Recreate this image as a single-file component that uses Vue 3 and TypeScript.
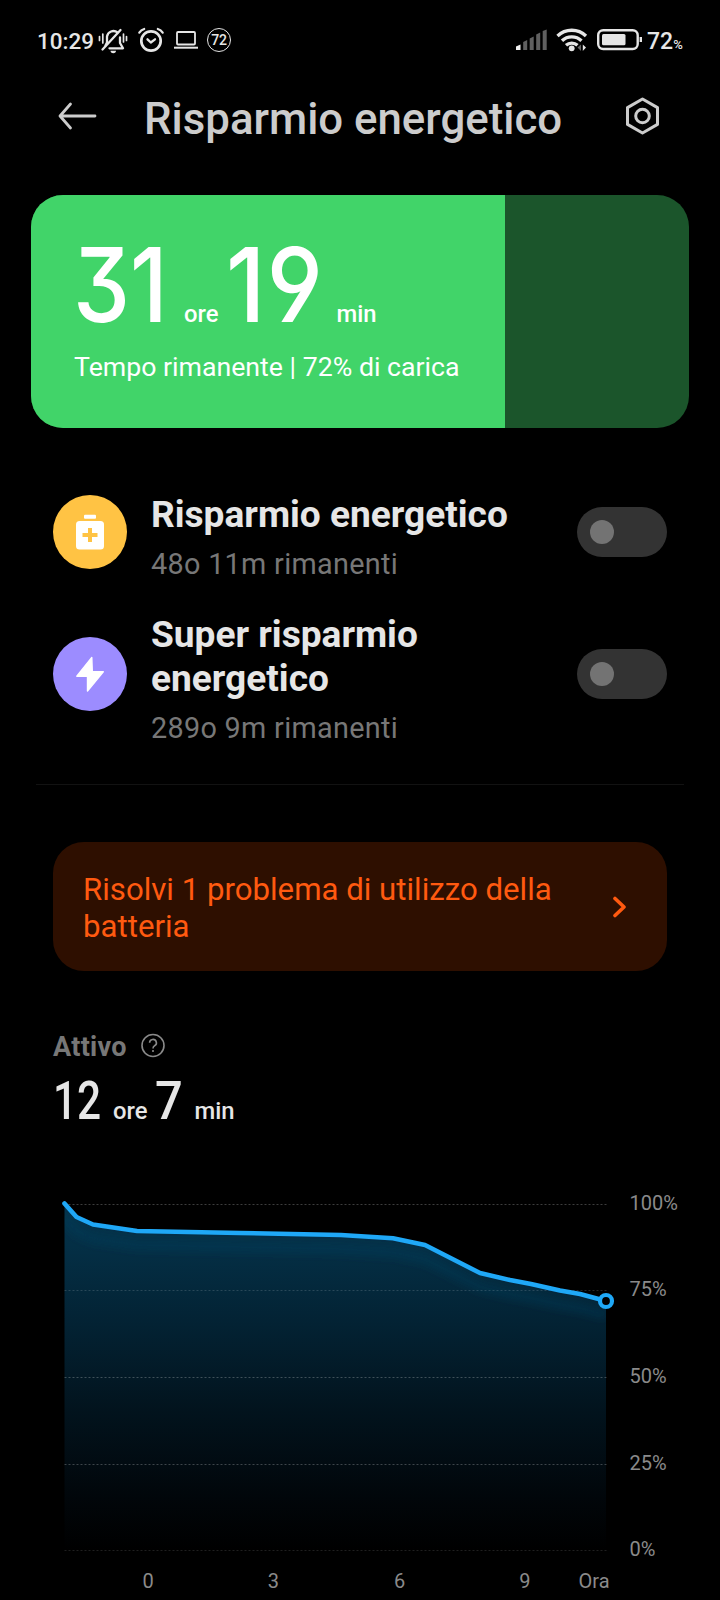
<script setup lang="ts">
import { ref } from 'vue'

interface Mode {
  id: string
  title: string
  remaining: string
  on: boolean
}

const charge = 72

const modes = ref<Mode[]>([
  { id: 'saver', title: 'Risparmio energetico', remaining: '48o 11m rimanenti', on: false },
  { id: 'super', title: 'Super risparmio energetico', remaining: '289o 9m rimanenti', on: false },
])

const levels = [
  { label: '100%', y: 24.5, opacity: 0.24 },
  { label: '75%', y: 110.5, opacity: 0.15 },
  { label: '50%', y: 197.5, opacity: 0.24 },
  { label: '25%', y: 284.5, opacity: 0.24 },
  { label: '0%', y: 370.5, opacity: 0.12 },
]

const hours = [
  { label: '0', x: 148.2 },
  { label: '3', x: 273.4 },
  { label: '6', x: 399.6 },
  { label: '9', x: 524.8 },
  { label: 'Ora', x: 594 },
]

const points: [number, number][] = [
  [64.5, 23.5], [76.5, 37], [93, 44.5], [137, 51], [240, 53], [341, 55], [393, 58.2],
  [425, 65], [480, 93], [510, 100], [531, 104], [560, 110.5], [580, 114], [606, 121],
]
const line = points.map((p) => p.join(',')).join(' ')
const area = `${line} 606,370 64.5,370`
</script>

<template>
  <main class="screen">
    <div class="status">
      <span class="clock">10:29</span>
      <svg class="bell" width="30" height="28" viewBox="0 0 30 28">
        <g fill="none" stroke="#e6e6e6" stroke-width="2.300" stroke-linecap="round" stroke-linejoin="round">
          <path d="M7.500 19.500l1.500-3v-6a6.500 6.500 0 0 1 10.500-4M11.500 22.300H25L22 17v-5.500" />
          <path d="M4.500 23.500L22.500 4" stroke-width="2.300" />
          <path d="M1.500 10.500v4M4.800 8v9M28.500 10.500v4M25.500 8v8" stroke-width="1.700" />
        </g>
        <path d="M12.500 24.800h5.500a2.750 2.400 0 0 1-5.500 0z" fill="#e6e6e6" />
      </svg>
      <svg class="alarm" width="28" height="26" viewBox="0 0 28 26">
        <g fill="none" stroke="#e6e6e6" stroke-linecap="round">
          <circle cx="14" cy="14" r="9.700" stroke-width="2.700" />
          <path d="M2.300 5.700Q4 3 7.200 2M25.700 5.700Q24 3 20.800 2" stroke-width="2.200" />
          <path d="M10.500 12.300l3.300 3.200 4.200-3.200" stroke-width="2.300" stroke-linejoin="round" />
        </g>
      </svg>
      <svg class="laptop" width="26" height="20" viewBox="0 0 26 20">
        <rect x="4" y="2" width="18" height="12.500" rx="1" fill="none" stroke="#e6e6e6" stroke-width="1.800" />
        <path d="M1 17.700h24" stroke="#e6e6e6" stroke-width="2" />
      </svg>
      <span class="ring">72</span>
      <span class="grow"></span>
      <svg class="signal" width="33" height="22" viewBox="0 0 33 22">
        <path d="M1 21v-3.500l4.500-2V21z" fill="#f0f0f0" />
        <path d="M8.200 21v-8l4-2V21zM14.700 21V9.500l4-2V21zM21.200 21V5.500l4-2V21zM27.700 21V2l4-1.500V21z" fill="#606060" />
      </svg>
      <svg class="wifi" width="32" height="24" viewBox="0 0 32 24">
        <g fill="none" stroke="#e6e6e6" stroke-width="3.300">
          <path d="M1.500 8a20.500 20.500 0 0 1 28.500 0" />
          <path d="M6 12.800a14 14 0 0 1 19.500 0" />
          <path d="M10 17.300a8.500 8.500 0 0 1 11.500 0" />
        </g>
        <circle cx="15.700" cy="20.300" r="2.900" fill="#e6e6e6" />
        <path d="M25 16.500v6.500l-3.500-3.500z" fill="#666" />
        <path d="M26.800 16.500v6.500l3.200-3.500z" fill="#e6e6e6" />
      </svg>
      <svg class="battery" width="46" height="22" viewBox="0 0 46 22">
        <rect x="1.200" y="1.200" width="39.500" height="18.800" rx="5" fill="none" stroke="#e6e6e6" stroke-width="2.400" />
        <rect x="5" y="5" width="23.500" height="11.200" rx="1.500" fill="#e6e6e6" />
        <path d="M43.800 8v5" stroke="#e6e6e6" stroke-width="2.400" />
      </svg>
      <span class="level">{{ charge }}<small>%</small></span>
    </div>

    <header class="bar">
      <svg class="back" width="40" height="28" viewBox="0 0 40 28" fill="none" stroke="#ccc" stroke-width="2.800" stroke-linecap="round" stroke-linejoin="round">
        <path d="M37 14H2M12.500 2L2 14l10.500 12" />
      </svg>
      <h1>Risparmio energetico</h1>
      <svg class="gear" width="36" height="38" viewBox="0 0 36 38" fill="none" stroke="#ccc" stroke-width="3" stroke-linejoin="round">
        <path d="M17.500 2L32.500 10.600V27.400L17.500 36L2.500 27.400V10.600z" />
        <circle cx="17.500" cy="19" r="6.800" />
      </svg>
    </header>

    <section class="charge">
      <div class="fill" :style="{ width: charge + '%' }"></div>
      <div class="info">
        <p class="big">
          <span class="num h">31</span><span class="unit">ore</span><span class="num m">19</span><span class="unit">min</span>
        </p>
        <p class="caption">Tempo rimanente | {{ charge }}% di carica</p>
      </div>
    </section>

    <section class="modes">
      <div v-for="mode in modes" :key="mode.id" class="mode" :class="mode.id">
        <div class="badge">
          <svg v-if="mode.id === 'saver'" width="30" height="36" viewBox="0 0 30 36">
            <rect x="9" y="0.700" width="12" height="4" rx="1" fill="#fff" />
            <rect x="1" y="7" width="28" height="28.500" rx="3.500" fill="#fff" />
            <path d="M15 14v14M7.500 21h15" stroke="#ffc344" stroke-width="4" />
          </svg>
          <svg v-else width="30" height="36" viewBox="0 0 30 36">
            <path d="M16.800 1.500L1.800 20.300H12.500V35L28.300 15.700H17.300z" fill="#fff" stroke="#fff" stroke-width="1.400" stroke-linejoin="round" />
          </svg>
        </div>
        <div class="text">
          <h2>{{ mode.title }}</h2>
          <p>{{ mode.remaining }}</p>
        </div>
        <button class="toggle" :class="{ on: mode.on }" @click="mode.on = !mode.on"><i></i></button>
      </div>
    </section>

    <hr />

    <section class="alert">
      <p>Risolvi 1 problema di utilizzo della batteria</p>
      <svg width="16" height="24" viewBox="0 0 16 24" fill="none" stroke="#ff5a10" stroke-width="3.600" stroke-linecap="round" stroke-linejoin="round">
        <path d="M3 2.500L12 11l-9 8.500" />
      </svg>
    </section>

    <section class="active">
      <div class="label">
        <span>Attivo</span>
        <svg width="26" height="26" viewBox="0 0 26 26" fill="none" stroke="#8a8a8a" stroke-width="1.600">
          <circle cx="13" cy="12.500" r="11" />
          <path d="M9.600 9.800a3.400 3.400 0 1 1 5 3c-1.200.7-1.600 1.200-1.600 2.700" />
          <path d="M13 17v2" />
        </svg>
      </div>
      <p class="spent">
        <span class="n n12">12</span><span class="unit">ore</span><span class="n n7">7</span><span class="unit">min</span>
      </p>
    </section>

    <svg class="chart" width="720" height="420" viewBox="0 0 720 420">
      <defs>
        <linearGradient id="shade" x1="0" y1="24" x2="0" y2="370" gradientUnits="userSpaceOnUse">
          <stop offset="0" stop-color="#04344c" />
          <stop offset="0.140" stop-color="#042e44" />
          <stop offset="0.350" stop-color="#032233" />
          <stop offset="0.600" stop-color="#02131d" />
          <stop offset="0.850" stop-color="#01060a" />
          <stop offset="1" stop-color="#000" />
        </linearGradient>
        <clipPath id="under"><polygon :points="area" /></clipPath>
        <filter id="soft" x="-5%" y="-30%" width="110%" height="170%"><feGaussianBlur stdDeviation="4" /></filter>
      </defs>
      <polygon :points="area" fill="url(#shade)" />
      <g clip-path="url(#under)">
        <polyline :points="line" transform="translate(0 14)" fill="none" stroke="#0b4560" stroke-opacity="0.350" stroke-width="9" filter="url(#soft)" />
      </g>
      <path v-for="l in levels" :key="l.label" :d="`M64.500 ${l.y}H608`" class="grid" :stroke-opacity="l.opacity" />
      <polyline :points="line" fill="none" stroke="#1fa8f7" stroke-width="4.600" stroke-linecap="round" stroke-linejoin="round" />
      <circle cx="606" cy="121" r="6" fill="#000" stroke="#1fa8f7" stroke-width="4.200" />
      <text v-for="l in levels" :key="'t' + l.label" x="629.500" :y="l.y + 5.500">{{ l.label }}</text>
      <text v-for="h in hours" :key="'h' + h.label" :x="h.x" y="407.500" text-anchor="middle">{{ h.label }}</text>
    </svg>
  </main>
</template>

<style>
html,
body {
  background: #000;
}
</style>

<style scoped>
.screen {
  width: 720px;
  height: 1600px;
  overflow: hidden;
  background: #000;
  color: #e6e6e6;
  font-family: Roboto, 'Liberation Sans', sans-serif;
}
h1, h2, p {
  margin: 0;
  font-weight: 400;
}
svg {
  display: block;
  flex: none;
}
.status {
  display: flex;
  align-items: center;
  box-sizing: border-box;
  height: 80px;
  padding-left: 37px;
  padding-right: 36px;
}
.clock {
  width: 61px;
  font-size: 22.5px;
  font-weight: 500;
  margin-top: 2px;
}
.alarm { margin-left: 9px; }
.laptop { margin-left: 8px; }
.ring {
  box-sizing: border-box;
  width: 24px;
  height: 24px;
  margin-left: 8px;
  border: 1.600px solid #e6e6e6;
  border-radius: 50%;
  font-size: 14px;
  font-weight: 500;
  line-height: 23px;
  text-align: center;
  letter-spacing: -0.300px;
}
.grow { flex: 1; }
.signal { margin-right: 8px; }
.wifi { margin-right: 9px; }
.battery { margin-right: 4px; }
.level {
  width: 37px;
  font-size: 23px;
  font-weight: 500;
  margin-top: 2px;
  white-space: nowrap;
}
.level small { font-size: 13px; }
.bar {
  display: flex;
  align-items: center;
  height: 75px;
  padding: 0 59px 0 58px;
}
.back, .gear { margin-bottom: 4px; }
.bar h1 {
  flex: 1;
  margin-left: 46px;
  padding-top: 2px;
  color: #ccc;
  font-size: 43.8px;
  font-weight: 500;
  line-height: 60px;
  white-space: nowrap;
}
.charge {
  display: grid;
  width: 658px;
  height: 233px;
  margin: 40px 0 0 31px;
  border-radius: 32px;
  overflow: hidden;
  background: #1b552b;
  color: #fff;
}
.fill, .info { grid-area: 1 / 1; }
.fill { background: #41d469; }
.info { padding: 40px 0 0 43px; }
.big, .spent {
  display: flex;
  align-items: baseline;
  white-space: nowrap;
}
.big { height: 111px; line-height: 100px; }
.num {
  font-family: Inter, sans-serif;
  font-feature-settings: 'cv09', 'cv04';
  font-size: 103px;
  font-weight: 500;
  transform-origin: left;
}
.h {
  width: 111px;
  margin-left: -1px;
  transform: scaleX(0.88);
}
.m {
  width: 110px;
  margin-left: 8px;
  letter-spacing: 1.500px;
  transform: scaleX(0.92);
}
.unit {
  font-size: 23.800px;
  font-weight: 500;
}
.caption {
  font-size: 26.700px;
  line-height: 42px;
}
.modes { padding: 56px 53px 0; }
.mode {
  display: flex;
  align-items: center;
}
.mode.saver { height: 96px; }
.mode.super { height: 140px; margin-top: 24px; }
.badge {
  display: flex;
  align-items: center;
  justify-content: center;
  flex: none;
  width: 74px;
  height: 74px;
  border-radius: 50%;
  background: #ffc344;
}
.super .badge { background: #9c8cff; }
.text { width: 426px; padding: 13px 0 0 24px; }
.text h2 {
  width: 380px;
  font-size: 37.100px;
  font-weight: 700;
  line-height: 44px;
}
.text p {
  margin-top: 6px;
  color: #777;
  font-size: 28.800px;
  line-height: 42px;
  letter-spacing: 0.300px;
}
.toggle {
  flex: none;
  width: 90px;
  height: 50px;
  padding: 0 13px;
  border: 0;
  border-radius: 25px;
  background: #333;
  text-align: left;
}
.toggle.on { text-align: right; }
.toggle i {
  display: inline-block;
  width: 24px;
  height: 24px;
  border-radius: 50%;
  background: #737373;
  vertical-align: middle;
}
hr {
  height: 1px;
  margin: 40px 36px 0;
  border: 0;
  background: #121212;
}
.alert {
  display: flex;
  align-items: center;
  justify-content: space-between;
  box-sizing: border-box;
  width: 614px;
  height: 129px;
  margin: 57px 0 0 53px;
  padding: 4px 39px 0 30px;
  border-radius: 31px;
  background: #2e0f00;
  color: #ff5a10;
  font-size: 31.200px;
  line-height: 36.500px;
}
.alert p { width: 490px; }
.alert svg { margin-bottom: 2px; }
.active { padding: 58px 53px 0; }
.label {
  display: flex;
  align-items: center;
  height: 34px;
  color: #777;
  font-size: 27px;
  font-weight: 700;
  letter-spacing: 0.300px;
}
.label svg { margin-left: 14px; }
.label span { width: 73px; padding-top: 1px; }
.spent { height: 59px; line-height: 77px; }
.n {
  font-size: 53px;
  font-weight: 500;
  transform-origin: left;
}
.n12 {
  width: 60px;
  transform: scaleX(0.8);
}
.n7 {
  width: 39px;
  margin-left: 8px;
  transform: scaleX(0.92);
}
.chart { margin-top: 58px; }
.chart text {
  fill: #8a8a8a;
  font-size: 20px;
}
.grid {
  stroke: #fff;
  stroke-width: 1;
  stroke-dasharray: 2 2;
}
</style>
